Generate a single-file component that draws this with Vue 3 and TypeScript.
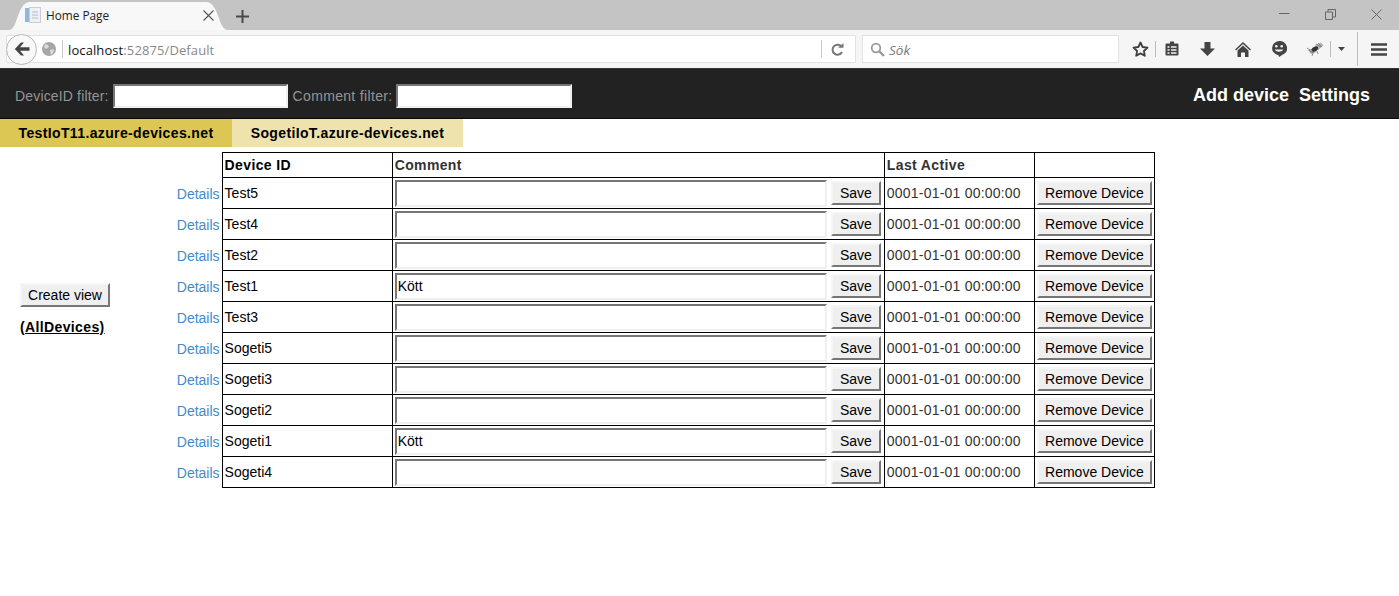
<script setup lang="ts">
interface Device { id: string; comment: string }
const devices: Device[] = [
  { id: 'Test5', comment: '' },
  { id: 'Test4', comment: '' },
  { id: 'Test2', comment: '' },
  { id: 'Test1', comment: 'Kött' },
  { id: 'Test3', comment: '' },
  { id: 'Sogeti5', comment: '' },
  { id: 'Sogeti3', comment: '' },
  { id: 'Sogeti2', comment: '' },
  { id: 'Sogeti1', comment: 'Kött' },
  { id: 'Sogeti4', comment: '' },
]
</script>

<template>
  <div class="page">
    <div class="tabstrip">
      <svg class="tab-shape" width="219" height="28" viewBox="0 0 219 28"><path d="M0 28C9 28 8 0 21 0H197C210 0 209 28 219 28z" fill="#f8f8f8" /></svg>
      <div class="tab">
        <svg class="favicon" width="16" height="16" viewBox="0 0 16 16">
          <rect x="0" y="1" width="5" height="14" fill="#8fb8dc" />
          <rect x="4.500" y="0.500" width="11" height="15" fill="#eef1f4" stroke="#c8ced4" />
          <path d="M7 5h6M7 8h6M7 11h6" stroke="#b4bcc4" />
        </svg>
        <span class="tab-title">Home Page</span>
        <svg class="tab-close" width="11" height="11" viewBox="0 0 11 11"><path d="M.5.5l10 10M10.500.5l-10 10" stroke="#555" stroke-width="1.100" fill="none" /></svg>
      </div>
      <svg class="newtab" width="13" height="13" viewBox="0 0 13 13"><path d="M6.500 0v13M0 6.500h13" stroke="#4a4a4a" stroke-width="2" /></svg>
      <div class="winctl">
        <svg width="11" height="11" viewBox="0 0 11 11"><path d="M0 4.500h10.500" stroke="#666" /></svg>
        <svg width="11" height="11" viewBox="0 0 11 11"><path d="M.5 3h7v7.500h-7zM3 3V.5h7.500V8H8" stroke="#666" fill="none" /></svg>
        <svg width="11" height="11" viewBox="0 0 11 11"><path d="M.5.5l10 10M10.500.5l-10 10" stroke="#666" fill="none" /></svg>
      </div>
    </div>

    <div class="toolbar">
      <div class="urlbar">
        <span class="backbtn">
          <svg width="16" height="14" viewBox="0 0 16 14"><path d="M7 0.500L0.800 7 7 13.500h3L6 8.800h9.500V5.200H6L10 .5z" fill="#444" /></svg>
        </span>
        <svg class="globe" width="14" height="14" viewBox="0 0 14 14">
          <circle cx="7" cy="7" r="7" fill="#a6a6a6" />
          <path d="M3 2l3 1 1 2-3 2-2-2zM8 8l4-1-1 4-2 2z" fill="#dcdcdc" />
        </svg>
        <span class="sep"></span>
        <span class="url"><span class="host">localhost</span>:52875/Default</span>
        <span class="sep sep-right"></span>
        <svg class="reload" width="13" height="13" viewBox="0 0 13 13"><path d="M10.800 4A5 5 0 1 0 11 9" stroke="#777" stroke-width="2" fill="none" /><path d="M7 4.800h5.500V0z" fill="#777" /></svg>
      </div>
      <div class="searchbar">
        <svg width="15" height="15" viewBox="0 0 15 15"><circle cx="6" cy="6" r="4.300" stroke="#999" stroke-width="1.800" fill="none" /><path d="M9 9l5 5" stroke="#999" stroke-width="2.400" /></svg>
        <span class="search-text">Sök</span>
      </div>
      <div class="tools">
        <svg class="t-star" width="17" height="16" viewBox="0 0 17 16"><path d="M8.500 1.500l2.100 4.500 4.900.6-3.600 3.400.9 4.800-4.300-2.400-4.300 2.400.9-4.800L1.500 6.600l4.900-.6z" fill="none" stroke="#3e3e3e" stroke-width="1.800" stroke-linejoin="round" /></svg>
        <span class="tsep t-sep1"></span>
        <svg class="t-list" width="14" height="15" viewBox="0 0 14 15"><path d="M1.500 2.500h11a1 1 0 0 1 1 1v10a1 1 0 0 1-1 1h-11a1 1 0 0 1-1-1v-10a1 1 0 0 1 1-1z" fill="#444" /><rect x="5" y="0.500" width="4" height="3" fill="#444" /><path d="M2.500 6h2M6 6h5.500M2.500 9h2M6 9h5.500M2.500 12h2M6 12h5.500" stroke="#f2f2f2" stroke-width="1.300" /></svg>
        <svg class="t-down" width="15" height="14" viewBox="0 0 15 14"><path d="M4.500 0h6v6.500H15L7.500 14 0 6.500h4.500z" fill="#444" /></svg>
        <svg class="t-home" width="16" height="15" viewBox="0 0 16 15"><path d="M8 0L0 7.500l1 1L8 2l7 6.500 1-1z" fill="#444" /><path d="M8 3.500L2.500 8.500V15h3.500v-4.500h4V15h3.500V8.500z" fill="#444" /></svg>
        <svg class="t-smile" width="16" height="16" viewBox="0 0 16 16"><path d="M8 0a8 7.200 0 0 1 3.500 13.700L8 16l-.5-1.800A8 7.200 0 0 1 8 0z" fill="#444" /><circle cx="5.300" cy="5.300" r="1.300" fill="#f2f2f2" /><circle cx="10.700" cy="5.300" r="1.300" fill="#f2f2f2" /><path d="M3.800 8.500c1.500 3 6.900 3 8.400 0z" fill="#f2f2f2" /></svg>
        <svg class="t-bug" width="17" height="14" viewBox="0 0 17 14"><path d="M8 3l6-2.500 2.500 3L11 8z" fill="#b5b5b5" /><path d="M1 8l6-2 2 4-5 2z" fill="#a8a8a8" /><path d="M9 2l5 3M11 1l4 4M2 8l4 3M4 7l3 4M0 6l3 2M6 11l-1 3M10 9l1 3" stroke="#777" stroke-width=".8" fill="none" /><ellipse cx="8" cy="7" rx="3.400" ry="2.200" fill="#333" transform="rotate(-30 8 7)" /></svg>
        <span class="tsep t-sep2"></span>
        <svg class="t-drop" width="7" height="4" viewBox="0 0 7 4"><path d="M0 0h7L3.500 4z" fill="#444" /></svg>
        <span class="tsep t-sep3"></span>
        <svg class="t-menu" width="16" height="13" viewBox="0 0 16 13"><path d="M0 1.500h16M0 6.500h16M0 11.500h16" stroke="#444" stroke-width="2.500" /></svg>
      </div>
    </div>

    <nav class="nav">
      <div class="filters">
        <label class="lbl-device" for="f1">DeviceID filter:</label>
        <input id="f1" class="filter" type="text" />
        <label class="lbl-comment" for="f2">Comment filter:</label>
        <input id="f2" class="filter filter-wide" type="text" />
      </div>
      <div class="links">
        <a>Add device</a>
        <a>Settings</a>
      </div>
    </nav>

    <div class="hubs">
      <div class="hub hub-active">TestIoT11.azure-devices.net</div>
      <div class="hub">SogetiIoT.azure-devices.net</div>
    </div>

    <main class="content">
      <aside class="views">
        <button class="btn create" type="button">Create view</button>
        <a class="allviews">(AllDevices)</a>
      </aside>
      <table class="grid">
        <thead>
          <tr>
            <th class="c-link"></th>
            <th class="c-id">Device ID</th>
            <th class="c-comment">Comment</th>
            <th class="c-active">Last Active</th>
            <th class="c-rm"></th>
          </tr>
        </thead>
        <tbody>
          <tr v-for="d in devices" :key="d.id">
            <td class="c-link"><a class="details">Details</a></td>
            <td class="c-id">{{ d.id }}</td>
            <td class="c-comment">
              <div class="comment-cell">
                <input class="comment" type="text" :value="d.comment" />
                <button class="btn save" type="button">Save</button>
              </div>
            </td>
            <td class="c-active">0001-01-01 00:00:00</td>
            <td class="c-rm"><button class="btn remove" type="button">Remove Device</button></td>
          </tr>
        </tbody>
      </table>
    </main>
  </div>
</template>

<style>
html, body { margin: 0; background: #fff; overflow: hidden; }
</style>

<style scoped>
.page {
  width: 1399px;
  height: 596px;
  overflow: hidden;
  font-family: "Liberation Sans", Arial, sans-serif;
  font-size: 14px;
  color: #000;
}
.tabstrip {
  height: 30px;
  background: #c4c4c4;
  display: flex;
  align-items: flex-end;
  position: relative;
  box-sizing: border-box;
}
.tab-shape {
  position: absolute;
  left: 9px;
  top: 2px;
}
.tab {
  width: 210px;
  height: 28px;
  margin-left: 15px;
  display: flex;
  align-items: center;
  padding: 0 8px 2px 10px;
  box-sizing: border-box;
  font-family: "Open Sans", sans-serif;
  font-size: 11.800px;
  color: #222;
  position: relative;
}
.favicon { flex: none; }
.tab-title { margin-left: 5px; flex: 1; }
.tab-close { margin-right: 3px; }
.newtab { margin: 0 0 7px 11px; position: relative; }
.winctl {
  position: absolute;
  top: 9px;
  right: 17px;
  display: flex;
  gap: 35px;
}
.toolbar {
  height: 38px;
  background: #f5f5f5;
  border-bottom: 1px solid #333;
  display: flex;
  align-items: center;
  box-sizing: content-box;
  position: relative;
}
.urlbar {
  width: 848px;
  height: 26px;
  margin-left: 6px;
  background: #fff;
  border: 1px solid #e2e2e2;
  border-radius: 2px 0 0 2px;
  display: flex;
  align-items: center;
  box-sizing: content-box;
  position: relative;
}
.backbtn {
  width: 31px;
  height: 31px;
  margin-left: -1px;
  border-radius: 50%;
  background: #f8f8f8;
  border: 1px solid #b8b8b8;
  box-sizing: border-box;
  display: flex;
  align-items: center;
  justify-content: center;
  flex: none;
}
.globe { margin-left: 5px; flex: none; }
.sep { width: 1px; height: 18px; background: #c8c8c8; margin-left: 6px; flex: none; }
.sep-right { margin-left: auto; }
.url {
  margin-left: 5px;
  padding-top: 1px;
  font-family: "Open Sans", sans-serif;
  font-size: 13px;
  letter-spacing: .1px;
  color: #888;
}
.host { color: #111; }
.reload { margin: 0 11px 0 9px; flex: none; }
.searchbar {
  width: 248px;
  height: 26px;
  margin-left: 6px;
  background: #fff;
  border: 1px solid #e2e2e2;
  display: flex;
  align-items: center;
  padding-left: 7px;
  box-sizing: content-box;
}
.search-text {
  margin-left: 4px;
  padding-top: 1px;
  font-family: "Open Sans", sans-serif;
  font-style: italic;
  font-size: 13.500px;
  color: #777;
}
.tools {
  flex: 1;
  height: 100%;
  position: relative;
}
.tools > * { position: absolute; }
.t-star { left: 13px; top: 11px; }
.t-sep1 { left: 36px; top: 11px; height: 16px; }
.t-list { left: 46px; top: 11px; }
.t-down { left: 81px; top: 12px; }
.t-home { left: 116px; top: 12px; }
.t-smile { left: 152px; top: 11px; }
.t-bug { left: 188px; top: 12px; }
.t-sep2 { left: 211px; top: 11px; height: 16px; }
.t-drop { left: 219px; top: 17px; }
.t-sep3 { left: 238px; top: 2px; height: 34px; background: #ddd; }
.t-menu { left: 252px; top: 13px; }
.tsep { width: 1px; background: #bbb; }

.nav {
  background: #222;
  border-bottom: 1px solid #080808;
  display: flex;
  align-items: center;
  justify-content: space-between;
  padding: 4px 29px 0 15px;
  box-sizing: border-box;
  height: 50px;
}
.filters {
  display: flex;
  align-items: center;
  color: #959595;
  font-size: 14px;
}
.lbl-device { letter-spacing: .16px; }
.lbl-comment { letter-spacing: .33px; }
.filter {
  width: 175px;
  height: 24px;
  flex: none;
  box-sizing: border-box;
  background: #fff;
  border-width: 2px;
  border-style: solid;
  border-color: #767676 #f0f0f0 #f0f0f0 #767676;
  padding: 1px 2px;
  margin: 0 5px 0 4px;
  border-radius: 0;
  outline: none;
}
.filter-wide { width: 176px; }
.links {
  display: flex;
  gap: 10px;
  color: #fff;
  font-weight: 700;
  font-size: 18px;
}
.hubs {
  display: flex;
  height: 28px;
}
.hub {
  width: 231px;
  background: #efe3ad;
  font-weight: 700;
  font-size: 14px;
  letter-spacing: .37px;
  display: flex;
  align-items: center;
  justify-content: center;
}
.hub-active { width: 232px; background: #dcc654; }
.content {
  display: flex;
  align-items: center;
  position: relative;
  padding-top: 5px;
}
.views {
  position: absolute;
  left: 20px;
  top: 136px;
  display: flex;
  flex-direction: column;
  align-items: flex-start;
  gap: 12px;
}
.allviews {
  font-weight: 700;
  letter-spacing: .37px;
  color: #000;
  text-decoration: underline;
}
.grid {
  border-collapse: collapse;
  table-layout: fixed;
  width: 1155px;
}
.grid th, .grid td {
  border: 1px solid #000;
  padding: 0 2px;
  box-sizing: border-box;
  text-align: left;
  height: 31px;
  white-space: nowrap;
}
.grid th {
  height: 25px;
  font-weight: 700;
  letter-spacing: .37px;
}
.grid .c-link {
  width: 222px;
  border: 0;
  border-right: 1px solid #000;
  text-align: right;
  padding: 2px 2px 0 0;
}
.grid th.c-link { padding: 0; }
.c-id { width: 170px; }
.c-comment { width: 492px; }
.c-active { width: 150px; color: #333; letter-spacing: .21px; }
.c-rm { width: 120px; }
th.c-comment, th.c-active { color: #333; }
.details { color: #428bca; }
.comment-cell {
  display: flex;
  align-items: center;
  justify-content: space-between;
}
.comment {
  width: 432px;
  height: 27px;
  box-sizing: border-box;
  border-width: 2px;
  border-style: solid;
  border-color: #767676 #f0f0f0 #f0f0f0 #767676;
  padding: 1px;
  margin: 0;
  background: #fff;
  font: inherit;
  color: #000;
  border-radius: 0;
  outline: none;
}
.btn {
  font: inherit;
  color: #000;
  background: #efefef;
  border-width: 2px;
  border-style: solid;
  border-color: #f5f5f5 #767676 #767676 #f5f5f5;
  border-radius: 0;
  height: 24px;
  padding: 0 6px;
  box-sizing: border-box;
}
.save { width: 50px; margin-right: 1px; }
.remove { width: 115px; display: block; margin: 0 auto; }
.create { width: 90px; }
</style>
